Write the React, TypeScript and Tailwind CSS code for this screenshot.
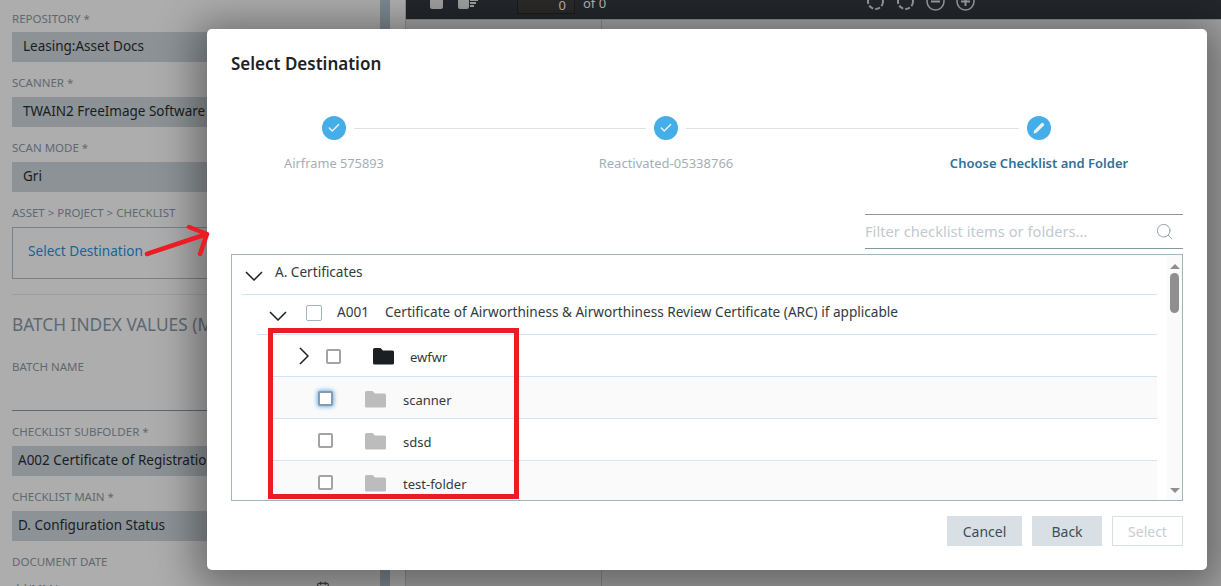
import React from 'react';
import { Check, Search, Calendar } from 'lucide-react';

const FormLabel = ({ children, className = '' }: { children: React.ReactNode; className?: string }) => (
  <div className={`shrink-0 text-[11.5px] leading-4 text-[#5d6972] whitespace-nowrap ${className}`}>{children}</div>
);

const FormField = ({ children, className = '' }: { children: React.ReactNode; className?: string }) => (
  <div className={`h-[30px] shrink-0 pb-[2px] bg-[#8c9296] flex items-center text-[13.5px] text-[#1a1d20] whitespace-nowrap overflow-hidden ${className}`}>
    {children}
  </div>
);

const FolderIcon = ({ dark }: { dark?: boolean }) => (
  <svg width="21" height="17" viewBox="0 0 21 17" className="shrink-0">
    <path
      d="M1.5 0h6l2.5 2.5h9.5a1.5 1.5 0 0 1 1.5 1.5v11a1.5 1.5 0 0 1-1.5 1.5h-18A1.5 1.5 0 0 1 0 15V1.5A1.5 1.5 0 0 1 1.5 0z"
      fill={dark ? '#1a1f24' : '#bcbcbc'}
    />
  </svg>
);

const ArrowDown = ({ className = '' }: { className?: string }) => (
  <svg width="18" height="10" viewBox="0 0 18 10" fill="none" stroke="#1a1f24" strokeWidth="1.5" className={`shrink-0 ${className}`}>
    <path d="M1 1l8 8 8-8" />
  </svg>
);

const ArrowRight = ({ className = '' }: { className?: string }) => (
  <svg width="10" height="18" viewBox="0 0 10 18" fill="none" stroke="#1a1f24" strokeWidth="1.5" className={`shrink-0 ${className}`}>
    <path d="M1 1l8 8-8 8" />
  </svg>
);

const StepDone = () => (
  <div className="w-6 h-6 shrink-0 rounded-full bg-[#45ade8] flex items-center justify-center">
    <Check size={14} strokeWidth={2.5} className="text-[#e8f2f8]" />
  </div>
);

const FolderRow = ({ name, striped, focused }: { name: string; striped?: boolean; focused?: boolean }) => (
  <div className={`h-[42px] shrink-0 ml-[38px] mr-[10px] border-b border-[#cce6f8] flex items-center pl-[48px] ${striped ? 'bg-[#fafafa]' : 'bg-white'}`}>
    <div className={`mt-[2px] w-[15px] h-[15px] shrink-0 rounded-[2px] bg-white border-2 ${focused ? 'shadow-[0_0_4px_1px_#6db5f0] border-[#8a9aa8]' : 'border-[#a3a3a3]'}`} />
    <div className="ml-[32px] mt-[3px]"><FolderIcon /></div>
    <span className="ml-[17px] mt-[6px] text-[13px] text-[#333a40]">{name}</span>
  </div>
);

export default function App() {
  return (
    <div className="relative h-[586px] w-full overflow-hidden flex bg-[#adadad] font-['Noto_Sans',sans-serif]">
      {/* Form column behind the dialog */}
      <div className="w-[380px] shrink-0 pl-3 pr-3 pt-[11px] flex flex-col">
        <FormLabel>REPOSITORY *</FormLabel>
        <FormField className="mt-[5px] pl-[11px]">Leasing:Asset Docs</FormField>
        <FormLabel className="mt-[13px]">SCANNER *</FormLabel>
        <FormField className="mt-[6px] pl-[11px]">TWAIN2 FreeImage Software Scanner</FormField>
        <FormLabel className="mt-[13px]">SCAN MODE *</FormLabel>
        <FormField className="mt-[6px] pl-[11px]">Gri</FormField>
        <FormLabel className="mt-[13px]">ASSET &gt; PROJECT &gt; CHECKLIST</FormLabel>
        <div className="mt-[6px] h-[52px] shrink-0 pb-[3px] border border-[#75838d] flex items-center pl-[15px] text-[13.6px] text-[#17649a]">
          Select Destination
        </div>
        <div className="mt-[15px] shrink-0 border-t border-[#98a0a5]" />
        <div className="mt-[18px] shrink-0 text-[17.3px] leading-6 text-[#5d6972] whitespace-nowrap">BATCH INDEX VALUES (MANDATORY)</div>
        <FormLabel className="mt-[22px]">BATCH NAME</FormLabel>
        <div className="mt-[35px] shrink-0 border-t border-[#5d6972]" />
        <FormLabel className="mt-[13px]">CHECKLIST SUBFOLDER *</FormLabel>
        <FormField className="mt-[6px] pl-[6px]">A002 Certificate of Registration</FormField>
        <FormLabel className="mt-[13px]">CHECKLIST MAIN *</FormLabel>
        <FormField className="mt-[6px] pl-[6px]">D. Configuration Status</FormField>
        <FormLabel className="mt-[13px]">DOCUMENT DATE</FormLabel>
        <div className="mt-[11px] shrink-0 flex items-start justify-between text-[12px] leading-4 text-[#5d6972] whitespace-nowrap pr-[38px]">
          <span className="mt-[1px]">dd/MM/yyyy</span>
          <Calendar size={14} className="text-[#3c4247]" />
        </div>
      </div>
      <div className="w-[10px] shrink-0 bg-[#7d8a92]" />
      <div className="w-[15px] shrink-0 bg-[#b0b0b0]" />

      {/* Viewer column */}
      <div className="flex-1 min-w-0 flex flex-col border-l border-[#8f8f8f]">
        <div className="h-5 shrink-0 bg-[#23272c] border-b border-[#8a8a8a] overflow-hidden flex items-start relative">
          <div className="ml-[24px] -mt-[4px] w-[13px] h-[13px] rounded-[2px] bg-[#a0a0a0]" />
          <div className="ml-[15px] -mt-[4px] w-[11px] h-[13px] rounded-[2px] bg-[#a0a0a0]" />
          <div className="ml-[1px] -mt-[1px] flex flex-col gap-[1px]">
            <div className="w-[8px] h-[2px] bg-[#a0a0a0]" />
            <div className="w-[6px] h-[2px] bg-[#a0a0a0]" />
            <div className="w-[4px] h-[2px] bg-[#a0a0a0]" />
          </div>
          <div className="ml-[39px] -mt-[4px] w-[58px] h-[18px] bg-[#2b2a28] border border-[#1b1b1b] text-right pr-[8px] text-[13px] leading-[16px] text-[#b5b5b5]">0</div>
          <span className="ml-[8px] -mt-[6px] text-[13px] text-[#b5b5b5]">of 0</span>
          <div className="ml-[260px] -mt-[8px] flex gap-[11px] text-[#9a9a9a]">
            <svg width="19" height="19" viewBox="0 0 19 19" fill="none" stroke="currentColor" strokeWidth="2" strokeDasharray="5 2"><circle cx="9.5" cy="9.5" r="7.5" /></svg>
            <svg width="19" height="19" viewBox="0 0 19 19" fill="none" stroke="currentColor" strokeWidth="2" strokeDasharray="5 2"><circle cx="9.5" cy="9.5" r="7.5" /></svg>
            <svg width="19" height="19" viewBox="0 0 19 19" fill="none" stroke="currentColor" strokeWidth="1.5"><circle cx="9.5" cy="9.5" r="8.5" /><path d="M5 9.5h9" strokeWidth="2" /></svg>
            <svg width="19" height="19" viewBox="0 0 19 19" fill="none" stroke="currentColor" strokeWidth="1.5"><circle cx="9.5" cy="9.5" r="8.5" /><path d="M5 9.5h9M9.5 5v9" strokeWidth="2" /></svg>
          </div>
        </div>
        <div className="flex-1 flex bg-[#a4a4a4]">
          <div className="w-[196px] border-r border-[#8a8a8a]" />
        </div>
      </div>

      {/* Dialog */}
      <div className="absolute left-[207px] top-[29px] w-[1000px] h-[541px] bg-white rounded-[5px] shadow-[0_6px_40px_12px_rgba(0,0,0,0.38)] pl-6 pr-6 flex flex-col">
        <h2 className="mt-[23px] text-[17px] leading-6 font-semibold text-[#1d2226]">Select Destination</h2>

        <div className="mt-[40px] flex items-center pl-[91px] pr-[132px]">
          <StepDone />
          <div className="mx-2 flex-1 border-t border-[#dfe1e3]" />
          <StepDone />
          <div className="mx-2 w-[333px] border-t border-[#dfe1e3]" />
          <div className="w-6 h-6 shrink-0 rounded-full bg-[#45ade8] flex items-center justify-center">
            <svg width="14" height="14" viewBox="0 0 14 14">
              <path d="M1.5 12.5l.7-3L9.6 2.1a1 1 0 0 1 1.4 0l.9.9a1 1 0 0 1 0 1.4L4.5 11.8z" fill="#e8f2f8" />
            </svg>
          </div>
        </div>
        <div className="mt-[14px] flex text-[13px] leading-[18px] text-center whitespace-nowrap">
          <div className="w-[206px] text-[12.8px] text-[#a3afb7]">Airframe 575893</div>
          <div className="ml-[126px] w-[206px] text-[#a3afb7]">Reactivated-05338766</div>
          <div className="ml-[167px] w-[206px] font-semibold text-[#2f7199]">Choose Checklist and Folder</div>
        </div>

        <div className="mt-[42px] self-end w-[318px] h-[35px] pb-[1px] border-y border-[#87989f] flex items-center justify-between pr-[9px]">
          <span className="text-[14.7px] text-[#c2c9cf]">Filter checklist items or folders...</span>
          <Search size={19} strokeWidth={1.1} className="text-[#87989f]" />
        </div>

        <div className="mt-[5px] h-[247px] border border-[#a0b4c1] flex overflow-hidden">
          <div className="flex-1 min-w-0 flex flex-col">
            <div className="h-[40px] shrink-0 ml-[10px] mr-[10px] border-b border-[#cce6f8] flex items-center text-[13.6px] text-[#333a40]">
              <ArrowDown className="ml-[3px] mt-[3px]" />
              <span className="ml-[12px] -mt-[4px]">A. Certificates</span>
            </div>
            <div className="h-[40px] shrink-0 ml-[25px] mr-[10px] border-b border-[#cce6f8] flex items-center text-[13.6px] text-[#333a40]">
              <ArrowDown className="ml-[12px] mt-[2px]" />
              <div className="ml-[19px] -mt-[4px] w-4 h-4 shrink-0 rounded-[2px] bg-white border border-[#a0b4c1]" />
              <span className="ml-[15px] -mt-[4px]">A001</span>
              <span className="ml-[16px] -mt-[4px] whitespace-nowrap">Certificate of Airworthiness &amp; Airworthiness Review Certificate (ARC) if applicable</span>
            </div>
            <div className="h-[42px] shrink-0 ml-[38px] mr-[10px] border-b border-[#cce6f8] flex items-center">
              <ArrowRight className="ml-[29px]" />
              <div className="ml-[17px] mt-[1px] w-[15px] h-[15px] shrink-0 rounded-[2px] bg-white border-2 border-[#a3a3a3]" />
              <div className="ml-[32px] mt-[2px]"><FolderIcon dark /></div>
              <span className="ml-[16px] mt-[4px] text-[13px] text-[#333a40]">ewfwr</span>
            </div>
            <FolderRow name="scanner" striped focused />
            <FolderRow name="sdsd" />
            <FolderRow name="test-folder" striped />
          </div>
          <div className="w-[15px] shrink-0 bg-[#fafafa] flex flex-col items-center justify-between pt-[9px] pb-[7px]">
            <div className="flex flex-col items-center gap-[4px]">
              <div className="w-0 h-0 border-x-[5px] border-x-transparent border-b-[5px] border-b-[#8f8f8f]" />
              <div className="w-[9px] h-[40px] rounded-full bg-[#8f8f8f]" />
            </div>
            <div className="w-0 h-0 border-x-[5px] border-x-transparent border-t-[5px] border-t-[#8f8f8f]" />
          </div>
        </div>

        <div className="mt-[15px] flex justify-end gap-[10px] text-[14px]">
          <button className="w-[75px] h-[30px] bg-[#d8dfe5] text-[#3d4d59]">Cancel</button>
          <button className="w-[70px] h-[30px] bg-[#d8dfe5] text-[#3d4d59]">Back</button>
          <button className="w-[71px] h-[30px] bg-white border border-[#d8dfe5] text-[#c5cdd3]">Select</button>
        </div>
      </div>

      {/* Annotations drawn on the screenshot */}
      <div className="absolute left-[268px] top-[328px] w-[251px] h-[171px] border-[5px] border-[#ed1c24]" />
      <svg className="absolute left-[140px] top-[220px]" width="76" height="42" viewBox="0 0 76 42" fill="none" stroke="#ed1c24" strokeWidth="4.5" strokeLinecap="round" strokeLinejoin="round">
        <path d="M7 34L67 14M49 7l18 7-7 20" />
      </svg>
    </div>
  );
}
